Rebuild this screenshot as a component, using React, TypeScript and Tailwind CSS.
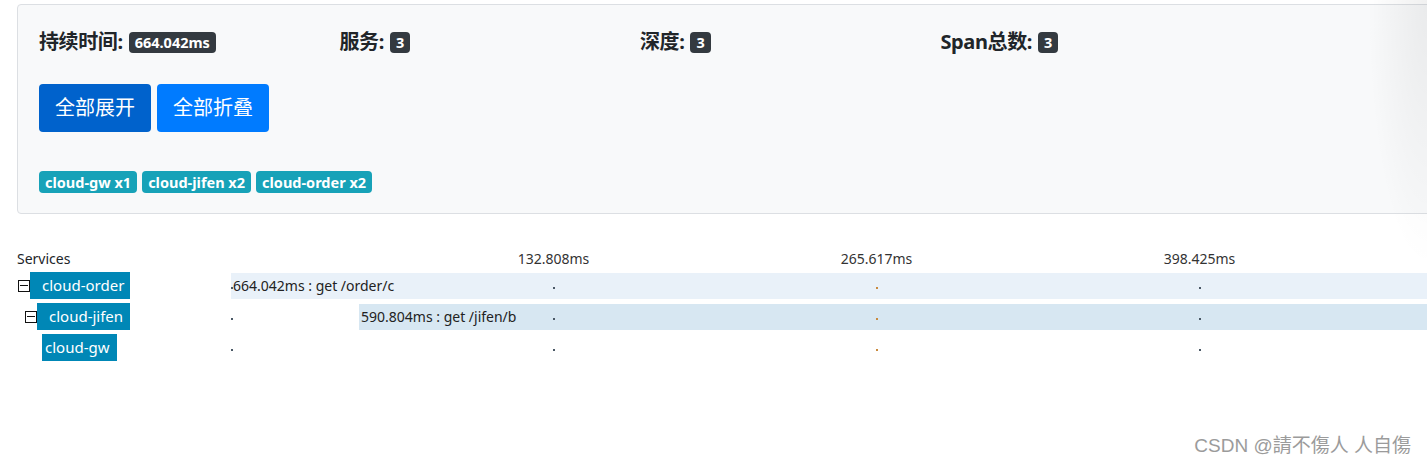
import React from "react"

const stats = [
  { label: "持续时间:", value: "664.042ms" },
  { label: "服务:", value: "3" },
  { label: "深度:", value: "3" },
  { label: "Span总数:", value: "3" },
]

const tags = ["cloud-gw x1", "cloud-jifen x2", "cloud-order x2"]

const ticks = ["132.808ms", "265.617ms", "398.425ms"]

const rows = [
  { name: "cloud-order", toggle: true, indent: "ml-[1px]", box: "w-[100px] pl-[12px]", barStart: 1, bar: "bg-[#e9f1f9]", text: "664.042ms : get /order/c" },
  { name: "cloud-jifen", toggle: true, indent: "ml-[8px]", box: "w-[93px] pl-[12px]", barStart: 129, bar: "bg-[#d7e7f2]", text: "590.804ms : get /jifen/b" },
  { name: "cloud-gw", toggle: false, indent: "ml-[25px]", box: "w-[75px] pl-[3px]", barStart: -1, bar: "", text: "" },
]

const dotXs = [1, 323, 646, 969]

function Toggle() {
  return (
    <span className="w-[12px] h-[12px] border border-[#111] bg-white flex items-center justify-center shrink-0">
      <span className="w-[8px] h-[1.5px] bg-[#111]" />
    </span>
  )
}

export default function App() {
  return (
    <div
      className="relative w-full h-[468px] overflow-hidden bg-white text-[#212529]"
      style={{ fontFamily: '"Noto Sans", "Noto Sans CJK SC", sans-serif' }}
    >
      {/* Summary card */}
      <div className="pt-[4px] pl-[17px]">
        <div className="w-[1440px] border border-[#dcdfe3] rounded-[4px] bg-[#f8f9fa] pl-[21px] pt-[25px] pb-[20px]">
          <div className="flex h-[24px] items-center">
            {stats.map(({ label, value }) => (
              <div key={label} className="w-[300.5px] flex items-center gap-[6px]">
                <span className="text-[20px] font-bold leading-none tracking-[-0.4px]">{label}</span>
                <span className="bg-[#343a40] text-white text-[14.5px] font-bold rounded-[4px] px-[6px] h-[21px] flex items-center leading-none">
                  {value}
                </span>
              </div>
            ))}
          </div>

          <div className="flex gap-[6px] mt-[30px]">
            <button className="w-[112px] h-[48px] rounded-[4px] bg-[#0062cc] text-white text-[20px]">全部展开</button>
            <button className="w-[112px] h-[48px] rounded-[4px] bg-[#007bff] text-white text-[20px]">全部折叠</button>
          </div>

          <div className="flex gap-[5px] mt-[39px]">
            {tags.map((t) => (
              <span key={t} className="h-[22px] px-[6px] rounded-[4px] bg-[#17a2b8] text-white text-[14.5px] font-bold flex items-center leading-none">
                {t}
              </span>
            ))}
          </div>
        </div>
      </div>

      {/* Timeline */}
      <div className="mt-[36px] text-[14px]">
        <div className="flex h-[16px] items-center pl-[17px]">
          <div className="w-[213px] shrink-0">Services</div>
          <div className="flex ml-[162px]">
            {ticks.map((t) => (
              <div key={t} className="w-[323px] text-center text-[#333]">{t}</div>
            ))}
          </div>
        </div>

        <div className="flex flex-col gap-[4px] mt-[6px]">
          {rows.map((r) => (
            <div key={r.name} className="flex h-[27px]">
              <div className="w-[230px] shrink-0 pl-[17px] flex items-center">
                <div className={`flex items-center ${r.indent}`}>
                  {r.toggle && <Toggle />}
                  <span className={`h-[27px] bg-[#0087b6] text-white text-[15px] flex items-center ${r.box}`}>
                    {r.name}
                  </span>
                </div>
              </div>
              <div className="relative flex-1 flex items-center">
                {r.barStart >= 0 && (
                  <div className={`h-[26px] flex-1 flex items-center ${r.bar}`} style={{ marginLeft: r.barStart }}>
                    <span className="pl-[2px] text-[14px] text-[#222]">{r.text}</span>
                  </div>
                )}
                {dotXs.map((x, i) => (
                  <span
                    key={x}
                    className={`absolute top-[15px] w-[2px] h-[2px] ${i === 2 ? "bg-[#c98a3e]" : "bg-[#4a5866]"}`}
                    style={{ left: x }}
                  />
                ))}
              </div>
            </div>
          ))}
        </div>
      </div>

      {/* right-edge shadow */}
      <div className="absolute right-0 top-0 w-[60px] h-[270px] bg-[radial-gradient(ellipse_at_top_right,rgba(0,0,0,0.06),rgba(0,0,0,0)_70%)] pointer-events-none" />

      {/* watermark */}
      <div
        className="absolute right-[16px] top-[436px] text-[19px] text-[#9b9b9b] leading-none [text-shadow:0_0_1px_#fff]"
        style={{ fontFamily: '"Liberation Sans", "Noto Sans CJK TC", sans-serif' }}
      >
        CSDN @請不傷人 人自傷
      </div>
    </div>
  )
}
